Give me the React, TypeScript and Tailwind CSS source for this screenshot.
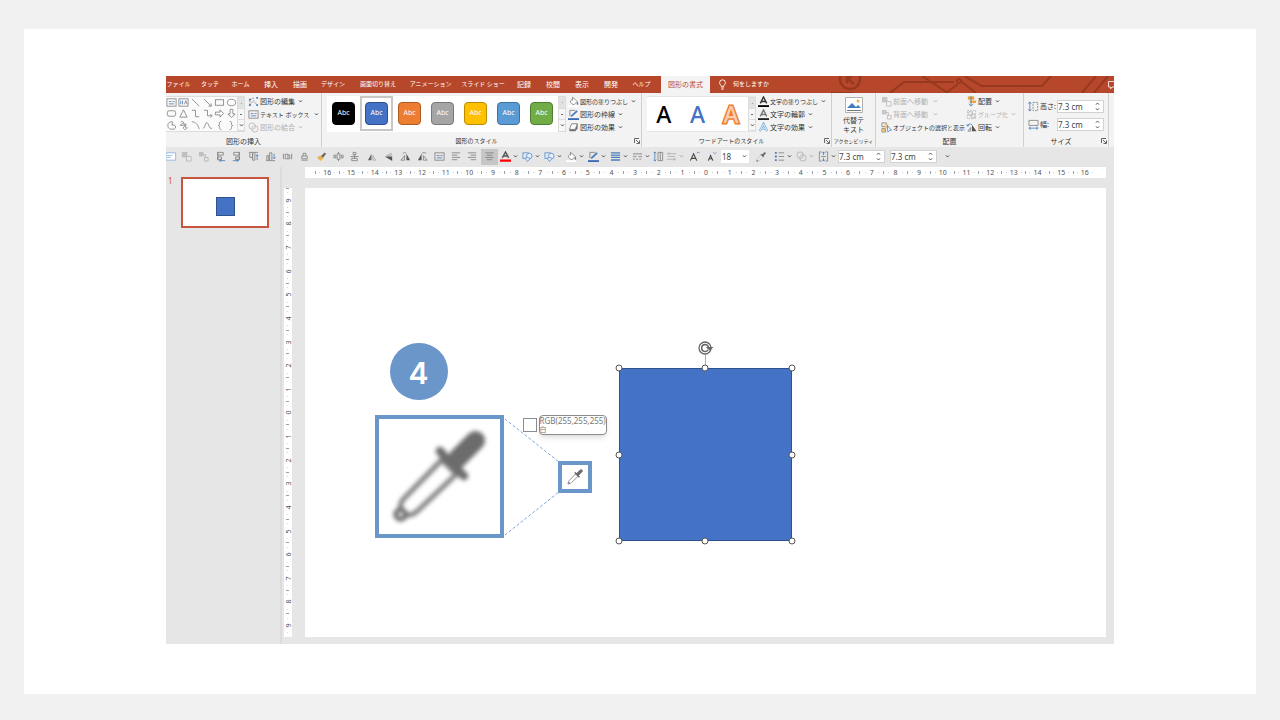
import type { ReactNode } from "react";
import clsx from "clsx";

const g = "#808080";
const b = "#4a7ebb";

// All toolbar icons are drawn on a 12x12 grid
const icons: Record<string, ReactNode> = {
  textbox: (
    <>
      <rect x="1" y="2" width="10" height="8" stroke={g} />
      <path d="M3 5h3M3 7.5h6" stroke={b} />
      <path d="M7 5h2.5" stroke={g} />
    </>
  ),
  vtextbox: (
    <>
      <rect x="1" y="2" width="10" height="8" stroke={g} />
      <path d="M3 4v4M5 4v4" stroke={b} />
      <path d="M7 8l1.5-4L10 8" stroke={g} />
    </>
  ),
  line: <path d="M2 2l8 8" stroke={g} />,
  arrow: <path d="M2 2l8 8M10 7v3H7" stroke={g} />,
  rect: <rect x="1.5" y="3" width="9" height="6" stroke={g} />,
  oval: <ellipse cx="6" cy="6" rx="4.5" ry="3.5" stroke={g} />,
  round: <rect x="1.5" y="3" width="9" height="6" rx="2" stroke={g} />,
  triangle: <path d="M6 2l4 8H2z" stroke={g} />,
  elbow: <path d="M2 2.500h4v7h4" stroke={g} />,
  elbowArrow: <path d="M2 2.500h4v6h5M9 6.500l2 2-2 2" stroke={g} />,
  right: <path d="M1.500 4.500h5V2L10.500 6l-4 4V7.500h-5z" stroke={g} />,
  down: <path d="M4.500 1.500v5H2L6 10.500l4-4H7.500v-5z" stroke={g} />,
  pie: <path d="M5 2C1 3 1 9 5 10h4c2-1 2-4 0-4.500H6.500L7 2z" stroke={g} />,
  scribble: <path d="M3 2c3-1 4 1 2 2S1 6 4 6s5-3 5-1-4 2-3 4 3 2 4-1M6 3l3 6" stroke={g} />,
  arc: <path d="M2 2c4 0 7 3 8 8" stroke={g} />,
  curve: <path d="M1 9c3 0 2-7 4.500-6S7 10 11 9" stroke={g} />,
  braceL: <path d="M8 1.500C5.500 1.500 6 3 6 4.500S5.500 6 4.500 6C6 6 6 7 6 8s0 2.500 2 2.500" stroke={g} />,
  braceR: <path d="M4 1.500c2.500 0 2 1.500 2 3S6.500 6 7.500 6C6 6 6 7 6 8s0 2.500-2 2.500" stroke={g} />,
  editShape: (
    <>
      <path d="M2 10V4l5-2M2 10l4-5 4 5" stroke={g} strokeDasharray="2 1" />
      <path d="M1 9h2v2H1zM1 3h2v2H1zM9 9h2v2H9zM9 1h2v2H9z" fill={b} />
    </>
  ),
  merge: (
    <>
      <circle cx="4.500" cy="4.500" r="3.500" stroke={g} />
      <circle cx="7.500" cy="7.500" r="3.500" stroke={g} />
    </>
  ),
  bucket: (
    <>
      <path d="M0 11h11" stroke="#ffffff" strokeWidth="2" />
      <path d="M2.500 5.500L6 2l4 4-3.500 3.500c-1 0-4-2-4-4z" fill="#ffffff" stroke={g} />
      <path d="M5 1v4" stroke={g} />
      <path d="M10 6c1.500 2 1.500 3 .5 3.500S9 8.500 10 6z" fill={b} />
    </>
  ),
  pen: (
    <>
      <path d="M2 1.500h6M2 1.500V8" stroke={g} />
      <path d="M3.500 8L10 2" stroke={b} strokeWidth="2" />
      <path d="M0 11h12" stroke="#3b68b5" strokeWidth="2" />
    </>
  ),
  effect: (
    <>
      <path d="M4 2h6.500v5L8 10H1.500V8z" fill="#737373" />
      <path d="M4 2h6L8 8H1.500z" fill="#ffffff" stroke={g} />
    </>
  ),
  textFill: (
    <>
      <path d="M2.500 8L6 1l3.500 7M4 6h4" stroke="#333333" strokeWidth="1.500" />
      <path d="M0 11h12" stroke="#000000" strokeWidth="2" />
    </>
  ),
  textLine: (
    <>
      <path d="M2.500 8L6 1l3.500 7M4 6h4" stroke="#777777" strokeWidth="1.500" />
      <path d="M0 11h12" stroke="#222222" strokeWidth="2" />
    </>
  ),
  textEffect: (
    <>
      <path d="M2 10L6 2l4 8M3.500 7.500h5" stroke="#7fb0de" strokeWidth="2.500" />
      <path d="M2 10L6 2l4 8M3.500 7.500h5" stroke="#e6f0fa" strokeWidth="1" />
    </>
  ),
  fontColor: (
    <>
      <path d="M2.500 7.500L6 1l3.500 6.500M4 5.500h4" stroke="#555555" strokeWidth="1.500" />
      <path d="M0 10.500h12" stroke="#ff0000" strokeWidth="2.500" />
    </>
  ),
  forward: (
    <>
      <path d="M1 1h6v6H1z" fill="#9a9a9a" />
      <path d="M6 6h5v5H6z" fill="#f3f3f3" stroke={g} />
    </>
  ),
  backward: (
    <>
      <path d="M1 1h5v5H1z" fill="#9a9a9a" />
      <path d="M5 4h3v3M7 7h4v4H7z" stroke={g} />
    </>
  ),
  selection: (
    <>
      <path d="M1 1h5v4H1zM1 7h4v4H1z" stroke={g} />
      <path d="M1.500 7.500h3v3h-3z" fill="#f2b65a" />
      <path d="M4 2h4v5H4z" fill="#f2c98a" />
      <path d="M7 4l4.500 5H9.500L7.500 11z" fill="#ffffff" stroke={b} />
    </>
  ),
  align: (
    <>
      <path d="M2 .5h7V4H2z" fill="#e8a33d" />
      <path d="M4 5h7v2.500H4z" fill="#e8a33d" />
      <path d="M5.500 0v11M3 8.500L5.500 11 8 8.500" stroke={b} />
    </>
  ),
  group: (
    <>
      <path d="M1.500 1.500h9v9h-9z" stroke={g} strokeDasharray="2 1" />
      <path d="M3 3h4v4H3zM5.500 5.500h4v4h-4z" stroke={g} />
    </>
  ),
  rotate: (
    <>
      <path d="M6.500 10V3l5 7z" fill="#555555" />
      <path d="M5 10H2l3-4z" stroke={g} />
      <path d="M1.500 4.500c.5-2.500 3-3 5-1.500M1 2.500l.5 2 2-.5" stroke={b} />
    </>
  ),
  height: (
    <>
      <path d="M2 1v10M.5 3L2 1l1.500 2M.5 9L2 11l1.500-2" stroke={b} />
      <path d="M5.500 1.500h5v9h-5z" stroke={g} strokeDasharray="2 1" />
    </>
  ),
  width: (
    <>
      <path d="M1 7V1.500h10V7z" stroke={g} />
      <path d="M1 10h10M3 8.500L1 10l2 1.500M9 8.500l2 1.500-2 1.500" stroke={b} />
    </>
  ),
  note: (
    <>
      <path d="M0 2h10.500v8H0z" fill="#ffffff" stroke="#8ab0dc" />
      <path d="M1 5h6M1 7h4" stroke="#8ab0dc" />
    </>
  ),
  alignLeft: (
    <>
      <path d="M3 1v9M3 1.500h6v3H3zM3 6.500h4v3H3z" stroke={g} />
      <path d="M11 10.500H5M7 8.500l-2 2 2 1.500" stroke={b} />
    </>
  ),
  alignRight: (
    <>
      <path d="M9 1v9M9 1.500H3v3h6zM9 6.500H5v3h4z" stroke={g} />
      <path d="M2 10.500h6M6 8.500l2 2L6 12" stroke={b} />
    </>
  ),
  alignTop: (
    <>
      <path d="M1 1.500h10M2 2v5h3V2M5 2v8h2.500V2" stroke={g} />
      <path d="M10 10V4M8.500 5.500L10 4l1.500 1.500" stroke={b} />
    </>
  ),
  alignBottom: (
    <>
      <path d="M1 10.500h10M2 10V5h2v5M5 10V2h2.500v8" stroke={g} />
      <path d="M10 3v5M8.500 7L10 8.500 11.500 7" stroke={b} />
    </>
  ),
  distH: <path d="M1.500 3v6M10.500 3v6M3.500 3.500h3v5h-3zM6.500 4.500h2v4h-2" stroke={g} />,
  distV: <path d="M2.500 10h7M3 5.500h6v3H3zM4.500 5.500v-3h3v3" stroke={g} />,
  brush: (
    <>
      <path d="M1 7l4-2 3 3-3 3z" fill="#efb04c" />
      <path d="M5.500 5.500l2 2L11 3 9.500 1.500z" fill="#666666" />
    </>
  ),
  centerH: <path d="M1 4.500h2v3H1zM9 4.500h2v3H9zM4.500 3h3v6h-3zM6 1v2M6 9v2" stroke={g} />,
  centerV: <path d="M1.500 6h9M4.500 1.500h3V4h-3zM3 8h6v2.500H3zM6 4v4" stroke={g} />,
  flipH: (
    <>
      <path d="M6 10H2l4-7z" fill="#666666" />
      <path d="M7.500 10V5l3 5z" stroke="#aaaaaa" />
    </>
  ),
  flipV: (
    <>
      <path d="M4 5h5V2.500z" stroke="#aaaaaa" />
      <path d="M2 6h8v5z" fill="#555555" />
    </>
  ),
  rotR: (
    <>
      <path d="M7 10V3l4 7z" fill="#555555" />
      <path d="M5 10H1l4-5zM3 3c1-1.500 3-1.500 4-.5" stroke={g} />
    </>
  ),
  rotL: (
    <>
      <path d="M5 10H1l4-7z" fill="#555555" />
      <path d="M7 10h4L7 5zM5 3c1-1.500 3-1.500 5-.5" stroke={g} />
    </>
  ),
  textLeft: <path d="M2 2h9M2 4.500h6M2 7h9M2 9.500h6" stroke={g} />,
  textRight: <path d="M1 2h9M4 4.500h6M1 7h9M4 9.500h6" stroke={g} />,
  textCenter: <path d="M1.500 2h9M3 4.500h6M1.500 7h9M3 9.500h6" stroke={g} />,
  shapes: (
    <>
      <rect x="1" y="2" width="6" height="6" stroke="#5b8fce" />
      <circle cx="8" cy="5.500" r="3" fill="#e8f1fb" stroke="#5b8fce" />
      <path d="M6 7l3 1-3 3.500L3.500 8z" fill="#e8f1fb" stroke="#5b8fce" />
    </>
  ),
  weight: <path d="M1 2h10M1 4.500h10M1 7h10M1 9.800h10" stroke={b} strokeWidth="1.500" />,
  dash: <path d="M1 3h10M1 6h4M7 6h4M1 9h2M4.500 9h2M8 9h2" stroke="#aaaaaa" strokeWidth="1.500" />,
  spaceV: (
    <>
      <path d="M2 1v10M.5 2.500L2 1l1.500 1.500M.5 9.500L2 11l1.500-1.500" stroke={b} />
      <path d="M5.500 1.500h5v9h-5zM8 1.500v9" stroke={g} />
    </>
  ),
  arrows: <path d="M1 3h10M1 9h10M3 1.500v3M9 7.500v3M2 6h8" stroke="#777777" />,
  grow: (
    <>
      <path d="M1.500 10.500L5 3l3.500 7.500M3 8h4" stroke="#444444" strokeWidth="1.200" />
      <path d="M8.500 2.500L10 1l1.500 1.500" stroke={b} />
    </>
  ),
  shrink: (
    <>
      <path d="M2.500 10.500L5 5l2.500 5.500M3.500 8.500h3" stroke="#444444" strokeWidth="1.200" />
      <path d="M8 1.500L9.500 3 11 1.500" stroke={b} />
    </>
  ),
  bullets: (
    <>
      <path d="M1 1h2v2H1zM1 5h2v2H1zM1 9h2v2H1z" fill={b} />
      <path d="M5 2h6M5 6h6M5 10h6" stroke={g} />
    </>
  ),
  fit: (
    <>
      <path d="M4 1H1.500v10H4M8 1h2.500v10H8M3.500 6h5" stroke={g} />
      <path d="M6 1v3.500M4.500 2.500L6 1l1.500 1.500M6 7.500V11M4.500 9.500L6 11l1.500-1.500" stroke={b} />
    </>
  ),
};

function Icon({ name, dim }: { name: string; dim?: boolean }) {
  return (
    <svg
      viewBox="0 0 12 12"
      fill="none"
      strokeWidth="0.9"
      className={clsx("size-[11px] shrink-0", dim && "opacity-50")}
      aria-hidden="true"
    >
      {icons[name]}
    </svg>
  );
}

function Chevron({ dim }: { dim?: boolean }) {
  return (
    <svg viewBox="0 0 6 4" fill="none" className={clsx("h-[3px] w-[5px] shrink-0", dim && "opacity-40")} aria-hidden="true">
      <path d="M1 .5l2 2.200L5 .5" stroke="#444444" strokeWidth="1.200" />
    </svg>
  );
}

function Eyedropper({ className }: { className: string }) {
  return (
    <svg viewBox="0 0 100 100" fill="none" className={className} stroke="#6c6c6c" strokeLinecap="round" aria-hidden="true">
      <path d="M53 32L13 73c-4 5-3 7-3 13l5 4c6 0 9-1 13-5L68 47z" fill="#ffffff" stroke="#7d7d7d" strokeWidth="5" />
      <circle cx="10" cy="89" r="5" fill="#ffffff" strokeWidth="5" />
      <path d="M69 31L88 12" strokeWidth="20" />
      <path d="M56 31l12-7 9 9-8 12z" fill="#6c6c6c" strokeWidth="3" />
      <path d="M51 23l5 6M71 44l5 5" strokeWidth="9" />
      <path d="M55 28l17 17" strokeWidth="7" />
    </svg>
  );
}

const tabs = [
  { label: "ファイル", cls: "w-[19px] text-[6px]" },
  { label: "タッチ", cls: "w-[14px] text-[6px]" },
  { label: "ホーム", cls: "w-[17px] text-[6px]" },
  { label: "挿入", cls: "w-[14px] text-[7px]" },
  { label: "描画", cls: "w-[14px] text-[7px]" },
  { label: "デザイン", cls: "w-[22px] text-[6px]" },
  { label: "画面切り替え", cls: "w-[38px] text-[6px]" },
  { label: "アニメーション", cls: "w-[37px] text-[6px]" },
  { label: "スライド ショー", cls: "w-[38px] text-[6px]" },
  { label: "記録", cls: "w-[14px] text-[7px]" },
  { label: "校閲", cls: "w-[14px] text-[7px]" },
  { label: "表示", cls: "w-[14px] text-[7px]" },
  { label: "開発", cls: "w-[14px] text-[7px]" },
  { label: "ヘルプ", cls: "w-[17px] text-[6px]" },
];

const shapeNames = [
  "textbox", "vtextbox", "line", "arrow", "rect", "oval",
  "round", "triangle", "elbow", "elbowArrow", "right", "down",
  "pie", "scribble", "arc", "curve", "braceL", "braceR",
];

const swatches = [
  "bg-black border-black",
  "bg-[#4472c4] border-[#2f528f]",
  "bg-[#ed7d31] border-[#ae5a21]",
  "bg-[#a5a5a5] border-[#787878]",
  "bg-[#ffc000] border-[#bc8c00]",
  "bg-[#5b9bd5] border-[#41719c]",
  "bg-[#70ad47] border-[#507e32]",
];

const quickIcons = [
  "forward", "backward", "alignLeft", "alignRight", "alignTop", "alignBottom", "distH", "distV", "brush",
  "centerH", "centerV", "flipH", "flipV", "rotR", "rotL", "textbox", "textLeft", "textRight", "textCenter",
];

const quickMenus = ["fontColor", "shapes", "shapes", "bucket", "pen", "weight", "dash"];

function GalleryScroll() {
  return (
    <div className="flex w-2 shrink-0 flex-col border border-[#dcdcdc] bg-[#f6f6f6]">
      <button aria-label="上へ" className="flex flex-1 items-center justify-center bg-[#e2e2e2]">
        <span className="size-px bg-gray-400" />
      </button>
      <button aria-label="下へ" className="flex flex-1 items-center justify-center border-y border-[#dcdcdc]">
        <span className="h-px w-0.5 bg-gray-500" />
      </button>
      <button aria-label="その他" className="flex flex-1 items-center justify-center">
        <Chevron />
      </button>
    </div>
  );
}

function Group({ label, width, launcher, children }: { label: string; width: string; launcher?: boolean; children: ReactNode }) {
  return (
    <section className={clsx("flex shrink-0 flex-col border-r border-[#d0d0d0] pt-[3px]", width)}>
      <div className="flex h-10">{children}</div>
      <div className={clsx("relative flex h-3 items-center justify-center leading-none whitespace-nowrap", launcher && "pr-2.5")}>
        <span className={label.length === 8 ? "text-[5px]" : label.length > 5 ? "text-[6px]" : "text-[7px]"}>{label}</span>
        {launcher && (
          <button aria-label={`${label}の詳細`} className="absolute right-px">
            <svg viewBox="0 0 6 6" fill="none" className="size-[6px]" aria-hidden="true">
              <path d="M.5 5V.5H5M2 2l3 3M5.500 2.500v3h-3" stroke="#555555" strokeWidth=".9" />
            </svg>
          </button>
        )}
      </div>
    </section>
  );
}

function MenuItem({ icon, label, small, dim, caret = true, wide }: { icon: string; label: string; small?: boolean; dim?: boolean; caret?: boolean; wide?: boolean }) {
  return (
    <button className="flex h-[13px] items-center gap-px leading-none whitespace-nowrap">
      <Icon name={icon} dim={dim} />
      <span className={clsx(small ? "text-[6px]" : "text-[7px]", dim && "text-[#b0b0b0]")}>{label}</span>
      {caret && (
        <span className={wide ? "pl-1" : "pl-0.5"}>
          <Chevron dim={dim} />
        </span>
      )}
    </button>
  );
}

function Spin({ id, label }: { id: string; label?: string }) {
  return (
    <div className="flex h-[13px] w-[47px] shrink-0 items-center border border-[#d2d2d2] bg-white pr-[3px]">
      <input id={id} aria-label={label} defaultValue="7.3 cm" className="w-0 flex-1 bg-transparent text-[8px] leading-none text-[#444]" />
      <div className="flex flex-col gap-[3px]">
        <span className="rotate-180">
          <Chevron />
        </span>
        <Chevron />
      </div>
    </div>
  );
}

function TitleTabs() {
  return (
    <nav className="relative flex h-[17px] items-center overflow-hidden bg-[#b7472a] pl-[3px] text-white">
      <svg viewBox="0 0 290 17" fill="none" className="absolute right-0 h-[17px] w-[290px]" stroke="#96391f" strokeWidth="2" aria-hidden="true">
        <circle cx="26" cy="3" r="10" strokeWidth="2.500" />
        <path d="M23-2v9M30-2l-6 5 6 5" strokeWidth="2.500" />
        <path d="M7 17h22M66 17l14-11h50M98 0l26 17M138 6l14 11M140 0l18 10h60l9-10M134 8l-12 9M258 17l14-17M270 17l14-17" />
        <circle cx="135" cy="5" r="2" />
      </svg>
      <div className="flex items-center gap-[15px] pb-px">
        {tabs.map((tab) => (
          <button key={tab.label} className={clsx("flex shrink-0 justify-center leading-none whitespace-nowrap", tab.cls)}>
            {tab.label}
          </button>
        ))}
      </div>
      <button className="ml-[11px] h-[17px] w-[49px] shrink-0 bg-[#f3f3f3] pb-px text-[7px] leading-none whitespace-nowrap text-[#b7472a]">
        図形の書式
      </button>
      <button className="relative ml-2 flex items-center gap-1.5 pb-px text-[6px] leading-none whitespace-nowrap">
        <svg viewBox="0 0 10 12" fill="none" className="h-[11px] w-[9px]" stroke="#ffffff" aria-hidden="true">
          <path d="M3.500 8C3.500 6.500 1.800 6 1.800 4a3.200 3.200 0 016.400 0c0 2-1.700 2.500-1.700 4zM3.500 9.800h3M4 11.300h2" />
        </svg>
        何をしますか
      </button>
      <button aria-label="コメント" className="absolute -right-1">
        <svg viewBox="0 0 10 10" fill="none" className="size-[10px]" stroke="#f4d9d2" aria-hidden="true">
          <path d="M.5 1.500h9v5.500H4L2.500 9V7h-2z" />
        </svg>
      </button>
    </nav>
  );
}

function Ribbon() {
  return (
    <div className="flex h-[54px] overflow-hidden bg-[#f3f3f3] text-[#333]">
      <Group label="図形の挿入" width="w-[156px]">
        <div className="flex h-[36px] border-y border-[#dcdcdc] bg-[#fbfbfb]">
          <div className="grid w-[71px] grid-cols-6 items-center">
            {shapeNames.map((name) => (
              <button key={name} aria-label={name} className="flex justify-center">
                <Icon name={name} />
              </button>
            ))}
          </div>
          <GalleryScroll />
        </div>
        <div className="-mt-px ml-[3px] flex flex-col">
          <MenuItem icon="editShape" label="図形の編集" />
          <MenuItem icon="textbox" label="テキスト ボックス" small wide />
          <MenuItem icon="merge" label="図形の結合" dim />
        </div>
      </Group>

      <Group label="図形のスタイル" width="w-[320px]" launcher>
        <div className="ml-[5px] flex h-[36px] bg-white">
          <div className="flex w-[231px]">
            {swatches.map((color, i) => (
              <button
                key={color}
                className={clsx("flex h-[35px] w-[33px] items-center justify-center", i === 1 && "border-2 border-[#c9c6c4]")}
              >
                <span className={clsx("flex h-[23px] w-[23px] shrink-0 items-center justify-center rounded border pb-0.5 text-[7px] leading-none text-white", color)}>
                  Abc
                </span>
              </button>
            ))}
          </div>
          <GalleryScroll />
        </div>
        <div className="-mt-px ml-0.5 flex flex-col">
          <MenuItem icon="bucket" label="図形の塗りつぶし" small />
          <MenuItem icon="pen" label="図形の枠線" />
          <MenuItem icon="effect" label="図形の効果" />
        </div>
      </Group>

      <Group label="ワードアートのスタイル" width="w-[190px]" launcher>
        <div className="ml-[5px] flex h-[36px] border-y border-[#e6e6e6] bg-white">
          <div className="flex w-[101px] items-center justify-around text-[23px] leading-none font-medium">
            <button className="text-black">A</button>
            <button className="text-[#4472c4]">A</button>
            <button className="text-[#f9cdb0] [-webkit-text-stroke:3px_#ed7d31] [paint-order:stroke]">A</button>
          </div>
          <GalleryScroll />
        </div>
        <div className="-mt-px ml-0.5 flex flex-col">
          <MenuItem icon="textFill" label="文字の塗りつぶし" small />
          <MenuItem icon="textLine" label="文字の輪郭" />
          <MenuItem icon="textEffect" label="文字の効果" />
        </div>
      </Group>

      <Group label="アクセシビリティ" width="w-[44px]">
        <button className="flex w-full flex-col items-center text-[7px] leading-[9px]">
          <svg viewBox="0 0 18 18" fill="none" className="mb-0.5 size-[18px] shrink-0" aria-hidden="true">
            <path d="M.5 1.500h17v15H.5z" fill="#ffffff" stroke="#b0b0b0" />
            <path d="M2 12l5-5 4 4 2-2 3 3z" fill="#3f7fbf" />
            <path d="M2 14.500h14" stroke="#777777" />
            <circle cx="13" cy="5" r="1.500" fill="#efb04c" />
          </svg>
          <span>代替テ</span>
          <span>キスト</span>
        </button>
      </Group>

      <Group label="配置" width="w-[148px]">
        <div className="-mt-px ml-[5px] flex w-[85px] flex-col">
          <MenuItem icon="forward" label="前面へ移動" dim wide />
          <MenuItem icon="backward" label="背面へ移動" dim wide />
          <MenuItem icon="selection" label="オブジェクトの選択と表示" small caret={false} />
        </div>
        <div className="-mt-px flex flex-col">
          <MenuItem icon="align" label="配置" />
          <MenuItem icon="group" label="グループ化" small dim />
          <MenuItem icon="rotate" label="回転" />
        </div>
      </Group>

      <Group label="サイズ" width="w-[85px]" launcher>
        <div className="ml-1 flex flex-col gap-[5px] pt-1 text-[7px] leading-none">
          <div className="flex items-center">
            <Icon name="height" />
            <label htmlFor="shape-height" className="w-[18px] pl-px whitespace-nowrap">高さ:</label>
            <Spin id="shape-height" />
          </div>
          <div className="flex items-center">
            <Icon name="width" />
            <label htmlFor="shape-width" className="w-[18px] pl-px whitespace-nowrap">幅:</label>
            <Spin id="shape-width" />
          </div>
        </div>
      </Group>
    </div>
  );
}

function QuickBar() {
  return (
    <div className="flex h-[19px] items-center overflow-hidden bg-[#e6e6e6]">
      <button aria-label="note" className="w-3 shrink-0">
        <Icon name="note" />
      </button>
      <div className="flex w-[320px] shrink-0">
        {quickIcons.map((name, i) => (
          <button key={name} aria-label={name} className={clsx("flex h-4 flex-1 items-center justify-center", i === 18 && "bg-[#c6c6c6]")}>
            <Icon name={name} dim={i < 2} />
          </button>
        ))}
      </div>
      {quickMenus.map((name, i) => (
        <QuickMenu key={i} name={name} />
      ))}
      <button aria-label="spacing" className="flex w-3 shrink-0 justify-center">
        <Icon name="spaceV" />
      </button>
      <QuickMenu name="arrows" dim />
      <button aria-label="grow" className="flex w-[17px] shrink-0 justify-center">
        <Icon name="grow" />
      </button>
      <button aria-label="shrink" className="flex w-[17px] shrink-0 justify-center">
        <Icon name="shrink" />
      </button>
      <div className="relative ml-px flex w-7 shrink-0 items-center">
        <select aria-label="フォント サイズ" defaultValue="18" className="h-[13px] w-full appearance-none bg-white pl-px text-[8px] leading-none text-[#444]">
          <option>18</option>
        </select>
        <span className="pointer-events-none absolute right-0.5 flex">
          <Chevron />
        </span>
      </div>
      <button aria-label="スポイト" className="flex w-[23px] shrink-0 justify-center">
        <Eyedropper className="size-[10px]" />
      </button>
      <QuickMenu name="bullets" />
      <QuickMenu name="merge" dim />
      <QuickMenu name="fit" />
      <div className="flex shrink-0 gap-[5px]">
        <Spin id="quick-height" label="高さ" />
        <Spin id="quick-width" label="幅" />
      </div>
      <button aria-label="カスタマイズ" className="ml-2">
        <Chevron />
      </button>
    </div>
  );
}

function QuickMenu({ name, dim }: { name: string; dim?: boolean }) {
  return (
    <button aria-label={name} className="flex w-[22px] shrink-0 items-center gap-0.5 pl-0.5">
      <Icon name={name} dim={dim} />
      <Chevron dim={dim} />
    </button>
  );
}

function Ruler({ max, vertical }: { max: number; vertical?: boolean }) {
  const marks = Array.from({ length: max * 2 + 1 }, (_, i) => Math.abs(i - max));
  const tick = vertical ? "h-px w-[3px]" : "h-[3px] w-px";
  return (
    <div
      className={clsx(
        "flex shrink-0 items-center overflow-hidden bg-white text-[7px] leading-none text-[#555]",
        vertical ? "h-[449px] w-2 flex-col" : "h-[11px] px-2.5",
      )}
    >
      {marks.map((n, i) => (
        <div key={i} className={clsx("flex flex-1 items-center justify-between", vertical ? "min-h-0 flex-col" : "min-w-0")}>
          <span className={clsx("shrink-0 bg-gray-400", tick)} />
          <span className="size-px bg-gray-300" />
          <span className={vertical ? "-rotate-90" : undefined}>{n}</span>
          <span className="size-px bg-gray-300" />
          <span />
        </div>
      ))}
    </div>
  );
}

const handles = [
  "left-0 top-0", "left-1/2 top-0", "left-full top-0",
  "left-0 top-1/2", "left-full top-1/2",
  "left-0 top-full", "left-1/2 top-full", "left-full top-full",
];

// Items sit freely on the slide, so they are placed from its top left corner
function Slide() {
  return (
    <div className="h-[449px] bg-white">
      <div className="relative mx-auto h-full w-[800px]">
        <div className="absolute top-[155px] left-[84px] flex h-[57px] w-[58px] items-center justify-center rounded-full bg-[#6b96ca] pt-0.5 font-[family-name:Inter] text-[30px] leading-none font-semibold text-white">
          4
        </div>

        <svg viewBox="0 0 56 120" fill="none" className="absolute top-[229px] left-[198px] h-[120px] w-[56px]" stroke="#7ea6d8" strokeDasharray="3 2" aria-hidden="true">
          <path d="M1 2l54 43M1 118l54-43" />
        </svg>

        <div className="absolute top-[227px] left-[69px] flex h-[123px] w-[129px] items-center justify-center border-4 border-[#6b96ca] bg-white">
          <Eyedropper className="size-[96px] blur-[2px]" />
        </div>
        <div className="absolute top-[273px] left-[252px] flex h-8 w-[34px] items-center justify-center border-4 border-[#6b96ca] bg-white">
          <Eyedropper className="size-4" />
        </div>

        <div className="absolute top-[230px] left-[217px] size-[14px] border border-[#8c8c94] bg-white" />
        <div className="absolute top-[227px] left-[233px] h-5 w-[68px] rounded-sm border border-[#8c8c8c] bg-white text-[8px] leading-[9px] whitespace-nowrap text-[#777] shadow-md">
          RGB(255,255,255)
          <div className="text-[7px] leading-[9px]">白</div>
        </div>

        <div className="absolute top-[180px] left-[313px] size-[173px] bg-[#4472c4] outline-1 -outline-offset-1 outline-[#2f528f]">
          <span className="absolute -top-4 left-1/2 h-4 w-px bg-[#b0b0b0]" />
          {handles.map((pos) => (
            <span key={pos} className={clsx("absolute size-[7px] -translate-1/2 rounded-full border border-[#555] bg-white", pos)} />
          ))}
          <svg viewBox="0 0 16 14" fill="none" className="absolute -top-[27px] left-1/2 h-[14px] w-4 -translate-x-[7px]" aria-hidden="true">
            <circle cx="7" cy="7" r="6" fill="#ffffff" stroke="#666666" strokeWidth="1.300" />
            <path d="M10.300 8.500A3.500 3.500 0 117 3.500c2 0 3.300 1.500 3.500 3.500" stroke="#666666" strokeWidth="1.500" />
            <path d="M7.500 6h8L12 9.500z" fill="#666666" />
          </svg>
        </div>
      </div>
    </div>
  );
}

export default function App() {
  return (
    <div lang="ja" className="min-h-screen bg-[#f1f1f1] px-6 pt-[29px] pb-[26px] font-['Noto_Sans','Noto_Sans_CJK_JP',sans-serif]">
      <div className="bg-white px-[142px] pt-[47px] pb-[50px]">
        <div className="overflow-hidden bg-[#e6e6e6]">
          <TitleTabs />
          <Ribbon />
          <QuickBar />
          <div className="flex pt-px">
            <aside className="flex w-[116px] shrink-0 items-start gap-2 border-r-2 border-[#dcdcdc] pt-[10px] pl-0.5 text-[#d0523a]">
              <span className="w-[5px] text-[8px] leading-none">1</span>
              <button aria-label="スライド 1" className="flex h-[51px] w-[88px] items-center justify-center border-2 border-[#c8553d] bg-white pt-2">
                <span className="size-[19px] border border-[#2f528f] bg-[#4472c4]" />
              </button>
            </aside>
            <div className="ml-0.5 flex w-[21px] shrink-0 pt-[21px]">
              <Ruler max={9} vertical />
            </div>
            <main className="mr-2 flex min-w-0 flex-1 flex-col gap-2.5 pb-[7px]">
              <Ruler max={16} />
              <Slide />
            </main>
          </div>
        </div>
      </div>
    </div>
  );
}
